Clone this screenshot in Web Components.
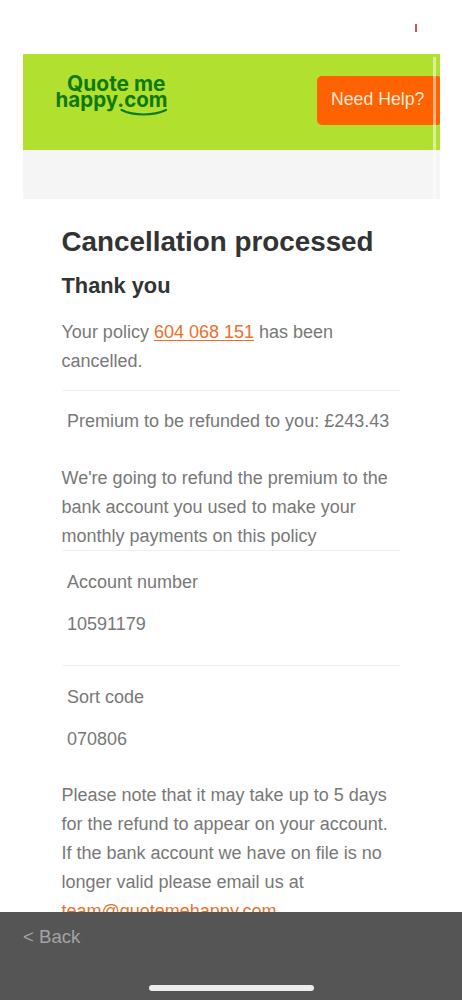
<!DOCTYPE html>
<html lang="en">
<head>
<meta charset="utf-8">
<title>Cancellation processed</title>
<style>
    html, body { margin: 0; height: 100%; background: #fff; }
    body { font-family: "Liberation Sans", Arial, sans-serif; overflow: hidden; }
</style>
</head>
<body>
<qmh-page>
    <qmh-header slot="header"></qmh-header>
    <qmh-title>Cancellation processed</qmh-title>
    <qmh-subtitle>Thank you</qmh-subtitle>
    <qmh-text>Your policy <qmh-link underline>604 068 151</qmh-link> has been cancelled.</qmh-text>
    <qmh-divider style="margin-top: 14px"></qmh-divider>
    <qmh-field style="margin-top: 16px">Premium to be refunded to you: £243.43</qmh-field>
    <qmh-text style="margin-top: 28px">We're going to refund the premium to the bank account you used to make your monthly payments on this policy</qmh-text>
    <qmh-divider style="margin-top: -1px"></qmh-divider>
    <qmh-field style="margin-top: 17px">Account number</qmh-field>
    <qmh-field style="margin-top: 13px">10591179</qmh-field>
    <qmh-divider style="margin-top: 26px"></qmh-divider>
    <qmh-field style="margin-top: 17px">Sort code</qmh-field>
    <qmh-field style="margin-top: 13px">070806</qmh-field>
    <qmh-text style="margin-top: 27px">Please note that it may take up to 5 days for the refund to appear on your account. If the bank account we have on file is no longer valid please email us at <qmh-link>team@quotemehappy.com</qmh-link></qmh-text>
    <qmh-backbar slot="footer"></qmh-backbar>
</qmh-page>

<script>
class QmhPage extends HTMLElement {
    constructor() {
        super();
        this.attachShadow({ mode: "open" });
        this.shadowRoot.innerHTML = `
            <style>
                :host { display: flex; flex-direction: column; height: 1000px; }
                main { flex: 1; min-height: 0; overflow: hidden; padding: 0 62px 0 61.5px; }
                .tick { position: absolute; left: 415px; top: 24px; width: 2px; height: 8px; background: #d9534a; }
            </style>
            <div class="tick"></div>
            <slot name="header"></slot>
            <main><slot></slot></main>
            <slot name="footer"></slot>
        `;
    }
}

class QmhHeader extends HTMLElement {
    constructor() {
        super();
        this.attachShadow({ mode: "open" });
        this.shadowRoot.innerHTML = `
            <style>
                :host { display: block; position: relative; margin: 54px 22.5px 0 22.5px; }
                .banner {
                    height: 96px;
                    background: #b1e02f;
                    display: flex;
                    align-items: center;
                    justify-content: space-between;
                }
                .help {
                    width: 123px;
                    height: 49px;
                    margin-top: -4px;
                    box-sizing: border-box;
                    padding: 0 0 2px 14.5px;
                    display: flex;
                    align-items: center;
                    background: #ff6200;
                    color: #ffe9d6;
                    font-size: 17.7px;
                    border-radius: 5px 2px 2px 5px;
                }
                .grey { height: 49px; background: #f5f5f5; }
                .strip { position: absolute; left: 410.5px; top: 3px; width: 3px; height: 142px; background: rgba(255,255,255,.5); }
            </style>
            <div class="banner">
                <qmh-logo></qmh-logo>
                <div class="help">Need Help?</div>
            </div>
            <div class="grey"></div>
            <div class="strip"></div>
        `;
    }
}

class QmhLogo extends HTMLElement {
    constructor() {
        super();
        this.attachShadow({ mode: "open" });
        this.shadowRoot.innerHTML = `
            <style>
                :host {
                    display: block;
                    width: 114px;
                    margin: -12px 0 0 31px;
                    color: #0f7a0c;
                    font-family: Inter, "Open Sans", sans-serif;
                    font-weight: 700;
                    font-size: 20.5px;
                    line-height: 16px;
                    text-align: right;
                }
                div { white-space: nowrap; }
                .top { padding-right: 2px; font-size: 20.9px; }
                svg { display: block; margin: 0 0 0 66px; }
            </style>
            <div class="top">Quote me</div>
            <div>happy.com</div>
            <svg width="48" height="9" viewBox="0 0 48 9">
                <path d="M1.5 2 C14 8 33 8 46 2" fill="none" stroke="#0f7a0c" stroke-width="2.2" stroke-linecap="round"/>
            </svg>
        `;
    }
}

class QmhTitle extends HTMLElement {
    constructor() {
        super();
        this.attachShadow({ mode: "open" });
        this.shadowRoot.innerHTML = `
            <style>
                :host { display: block; margin-top: 26px; font-size: 27.8px; line-height: 34px; font-weight: 700; color: #333; white-space: nowrap; }
            </style>
            <slot></slot>
        `;
    }
}

class QmhSubtitle extends HTMLElement {
    constructor() {
        super();
        this.attachShadow({ mode: "open" });
        this.shadowRoot.innerHTML = `
            <style>
                :host { display: block; margin-top: 14px; font-size: 21.8px; line-height: 26px; font-weight: 700; color: #333; }
            </style>
            <slot></slot>
        `;
    }
}

class QmhText extends HTMLElement {
    constructor() {
        super();
        this.attachShadow({ mode: "open" });
        this.shadowRoot.innerHTML = `
            <style>
                :host { display: block; margin-top: 19px; font-size: 18px; line-height: 29px; color: #787878; }
            </style>
            <slot></slot>
        `;
    }
}

class QmhLink extends HTMLElement {
    constructor() {
        super();
        this.attachShadow({ mode: "open" });
        this.shadowRoot.innerHTML = `<style>:host { display: inline; color: #ee6f2a; } :host([underline]) { text-decoration: underline; text-underline-offset: 2px; }</style><slot></slot>`;
    }
}

class QmhDivider extends HTMLElement {
    constructor() {
        super();
        this.attachShadow({ mode: "open" });
        this.shadowRoot.innerHTML = `
            <style>
                :host { display: block; height: 1px; background: #f0f0f0; }
            </style>
        `;
    }
}

class QmhField extends HTMLElement {
    constructor() {
        super();
        this.attachShadow({ mode: "open" });
        this.shadowRoot.innerHTML = `
            <style>
                :host { display: block; padding-left: 5.5px; font-size: 18px; line-height: 29px; color: #787878; white-space: nowrap; }
            </style>
            <slot></slot>
        `;
    }
}

class QmhBackbar extends HTMLElement {
    constructor() {
        super();
        this.attachShadow({ mode: "open" });
        this.shadowRoot.innerHTML = `
            <style>
                :host {
                    display: flex;
                    flex-direction: column;
                    justify-content: space-between;
                    height: 88px;
                    box-sizing: border-box;
                    padding: 12px 0 9px 0;
                    background: #555;
                }
                .back { padding-left: 23px; font-size: 18.6px; line-height: 26px; color: #a3a3a3; }
                .home { align-self: center; width: 165px; height: 6px; border-radius: 3px; background: #ececec; }
            </style>
            <div class="back">&lt; Back</div>
            <div class="home"></div>
        `;
    }
}

customElements.define("qmh-page", QmhPage);
customElements.define("qmh-header", QmhHeader);
customElements.define("qmh-logo", QmhLogo);
customElements.define("qmh-title", QmhTitle);
customElements.define("qmh-subtitle", QmhSubtitle);
customElements.define("qmh-text", QmhText);
customElements.define("qmh-link", QmhLink);
customElements.define("qmh-divider", QmhDivider);
customElements.define("qmh-field", QmhField);
customElements.define("qmh-backbar", QmhBackbar);
</script>
</body>
</html>
